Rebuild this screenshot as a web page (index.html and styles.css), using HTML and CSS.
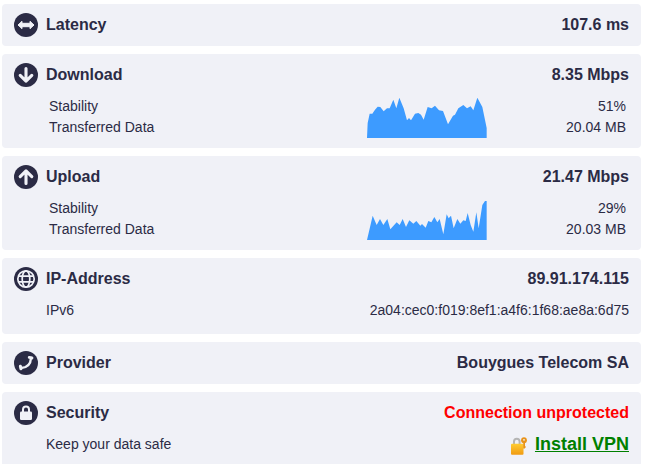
FILE: index.html
```html
<!DOCTYPE html>
<html lang="en">
<head>
<meta charset="utf-8">
<title>Speed test</title>
<link rel="stylesheet" href="styles.css">
</head>
<body>
<main class="list">
  <section class="card">
    <div class="head">
      <svg class="icon" viewBox="0 0 24 24"><circle cx="12" cy="12" r="12" fill="#2b2b45"/><path d="M4 12 8 8.300V10.300H16V8.300L20 12 16 15.700V13.700H8V15.700Z" fill="#f0f1f7" stroke="#f0f1f7" stroke-width="1" stroke-linejoin="round"/></svg>
      <span class="title">Latency</span><span class="value">107.6 ms</span>
    </div>
  </section>
  <section class="card">
    <div class="head">
      <svg class="icon" viewBox="0 0 24 24"><circle cx="12" cy="12" r="12" fill="#2b2b45"/><path d="M12 5.500V18M6.200 12.400 12 18.200 17.800 12.400" fill="none" stroke="#f0f1f7" stroke-width="3.100" stroke-linecap="round" stroke-linejoin="round"/></svg>
      <span class="title">Download</span><span class="value">8.35 Mbps</span>
    </div>
    <div class="stats">
      <div class="labels"><div>Stability</div><div>Transferred Data</div></div>
      <svg class="chart" viewBox="36 19 360 126" preserveAspectRatio="none"><polygon fill="#3d9bff" points="36,145 38,100 44,72 52,72 60,60 68,51 76,52 86,65 96,56 104,56 115,30 124,56 133,24 146,56 156,92 162,85 168,92 180,72 190,70 198,75 206,90 218,52 230,56 240,48 252,62 264,64 279,104 294,78 300,75 310,56 325,46 336,56 347,50 355,62 367,24 382,52 395,115 395,145"/></svg>
      <div class="nums"><div>51%</div><div>20.04 MB</div></div>
    </div>
  </section>
  <section class="card">
    <div class="head">
      <svg class="icon" viewBox="0 0 24 24"><circle cx="12" cy="12" r="12" fill="#2b2b45"/><path d="M12 18.500V6M6.200 11.600 12 5.800 17.800 11.600" fill="none" stroke="#f0f1f7" stroke-width="3.100" stroke-linecap="round" stroke-linejoin="round"/></svg>
      <span class="title">Upload</span><span class="value">21.47 Mbps</span>
    </div>
    <div class="stats">
      <div class="labels"><div>Stability</div><div>Transferred Data</div></div>
      <svg class="chart" viewBox="36 19 360 126" preserveAspectRatio="none"><polygon fill="#3d9bff" points="36,145 53,72 65,100 75,82 85,100 97,82 106,113 125,92 134,100 143,82 153,106 163,86 175,96 184,88 196,102 201,97 212,108 220,88 229,92 238,76 247,92 254,82 265,128 275,68 281,80 288,72 296,110 307,82 316,96 325,86 332,88 338,64 347,100 355,120 364,62 371,110 382,40 390,28 395,28 395,145"/></svg>
      <div class="nums"><div>29%</div><div>20.03 MB</div></div>
    </div>
  </section>
  <section class="card">
    <div class="head">
      <svg class="icon" viewBox="0 0 24 24"><circle cx="12" cy="12" r="12" fill="#2b2b45"/><g fill="none" stroke="#f0f1f7" stroke-width="1.700"><circle cx="12" cy="12" r="8.200"/><ellipse cx="12" cy="12" rx="3.800" ry="8.200"/><path d="M4.600 9.200H19.400M4.600 14.800H19.400"/></g></svg>
      <span class="title">IP-Address</span><span class="value">89.91.174.115</span>
    </div>
    <div class="row"><span>IPv6</span><span>2a04:cec0:f019:8ef1:a4f6:1f68:ae8a:6d75</span></div>
  </section>
  <section class="card">
    <div class="head">
      <svg class="icon" viewBox="0 0 24 24"><circle cx="12" cy="12" r="12" fill="#2b2b45"/><g fill="none" stroke="#f0f1f7" stroke-linecap="round"><path d="M7 17Q16.500 16.500 17 7" stroke-width="2.400"/><path d="M15.300 6.400 17.900 6.900" stroke-width="3"/><path d="M6.400 15.200 6.900 17.700" stroke-width="3"/></g></svg>
      <span class="title">Provider</span><span class="value">Bouygues Telecom SA</span>
    </div>
  </section>
  <section class="card">
    <div class="head">
      <svg class="icon" viewBox="0 0 24 24"><circle cx="12" cy="12" r="12" fill="#2b2b45"/><path d="M9 11V8.500A3 3 0 0 1 15 8.500V11" fill="none" stroke="#f0f1f7" stroke-width="2"/><rect x="6" y="10.500" width="12" height="8.500" rx="1.200" fill="#f0f1f7"/></svg>
      <span class="title">Security</span><span class="value alert">Connection unprotected</span>
    </div>
    <div class="row"><span>Keep your data safe</span>
      <span class="vpn">
        <svg class="lock" viewBox="0 0 16 18"><defs><linearGradient id="lock-body" x1="0" y1="0" x2="0" y2="1"><stop offset="0" stop-color="#ffcc33"/><stop offset="1" stop-color="#f09a12"/></linearGradient></defs><path d="M3 7V4.500A2.800 2.800 0 0 1 8.600 4.500V7" fill="none" stroke="#b5b5b5" stroke-width="2"/><rect x="0" y="6.800" width="12.500" height="11" rx="1" fill="url(#lock-body)"/><path d="M12.200 3H14V9.500H15V10.500H14V11.500H12.200Z" fill="#e8931a"/><circle cx="13" cy="3.200" r="2.900" fill="#e8931a"/><circle cx="13" cy="2.800" r="0.900" fill="#f0f1f7"/></svg>
        <a class="link" href="#">Install VPN</a>
      </span>
    </div>
  </section>
</main>
</body>
</html>
```
FILE: styles.css
```css
html, body {
  margin: 0;
  background: #fff;
}
body {
  padding: 4px 7px 0 2px;
  height: 460px;
  overflow: hidden;
  font-family: "Liberation Sans", Arial, sans-serif;
  color: #2b2b45;
  font-size: 14px;
}
.list {
  display: flex;
  flex-direction: column;
  gap: 8px;
}
.card {
  background: #f0f1f7;
  border-radius: 4px;
  padding: 0 12px;
}
.head {
  display: flex;
  align-items: center;
  height: 42px;
}
.icon {
  width: 24px;
  height: 24px;
  margin-right: 8px;
  flex: none;
}
.title {
  font-size: 16px;
  font-weight: 700;
  flex: 1;
}
.value {
  font-size: 16px;
  font-weight: 700;
}
.alert {
  color: #f00;
}
.stats {
  display: grid;
  grid-template-columns: 1fr 120px 139px;
  padding: 0 3px 10px 35px;
  line-height: 21px;
}
.chart {
  width: 120px;
  height: 42px;
  display: block;
}
.nums {
  text-align: right;
}
.row {
  display: flex;
  justify-content: space-between;
  align-items: center;
  padding: 0 0 14px 32px;
  height: 20px;
}
.vpn {
  display: flex;
  align-items: center;
}
.lock {
  width: 16px;
  height: 18px;
  margin: 4px 8px 0 0;
}
.link {
  font-size: 18px;
  font-weight: 700;
  color: #008000;
  text-decoration: underline;
}
```
